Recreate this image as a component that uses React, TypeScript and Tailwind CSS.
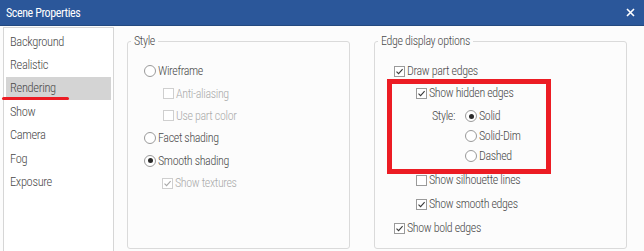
import type { ReactNode } from "react";

const SIDEBAR_ITEMS = ["Background", "Realistic", "Rendering", "Show", "Camera", "Fog", "Exposure"];

function CheckBox({ checked, disabled }: { checked?: boolean; disabled?: boolean }) {
  return (
    <span
      className={`flex h-[11px] w-[11px] shrink-0 items-center justify-center border bg-white ${
        disabled ? "border-[#cfcfcf]" : "border-[#9a9a9a]"
      }`}
    >
      {checked ? (
        <svg width="9" height="9" viewBox="0 0 9 9" fill="none">
          <path
            d="M1.5 4.6 L3.6 6.7 L7.6 2.2"
            stroke={disabled ? "#a8a8a8" : "#3a3a3a"}
            strokeWidth="1.1"
          />
        </svg>
      ) : null}
    </span>
  );
}

function Radio({ checked }: { checked?: boolean }) {
  return (
    <span className="flex h-[12px] w-[12px] shrink-0 items-center justify-center rounded-full border border-[#9a9a9a] bg-white">
      {checked ? <span className="h-[5px] w-[5px] rounded-full bg-[#2a2a2a]" /> : null}
    </span>
  );
}

function Row({
  control,
  label,
  disabled,
  className = "",
}: {
  control: ReactNode;
  label: string;
  disabled?: boolean;
  className?: string;
}) {
  return (
    <div className={`flex items-center gap-[2px] ${className}`}>
      {control}
      <span className={disabled ? "text-[#ababab]" : "text-[#4a4a4a]"}>{label}</span>
    </div>
  );
}

export default function App() {
  return (
    <div className="relative flex h-[251px] w-[644px] flex-col overflow-hidden bg-[#fcfcfc] font-['Roboto_Condensed','Liberation_Sans',sans-serif] text-[12px] font-light leading-[16px] tracking-[-0.35px]">
      {/* title bar */}
      <div className="flex h-[26px] shrink-0 items-center justify-between border-b border-[#24497f] bg-[#2b579a] pl-[6px] pr-[9px]">
        <span className="text-[12px] font-normal tracking-[-0.4px] text-white">Scene Properties</span>
        <svg width="9" height="9" viewBox="0 0 9 9">
          <path d="M1 1 L8 8 M8 1 L1 8" stroke="#ffffff" strokeWidth="1.6" />
        </svg>
      </div>

      <div className="flex min-h-0 flex-1 pl-[3px]">
        {/* sidebar */}
        <div className="mt-[1px] w-[111px] shrink-0 border border-b-0 border-[#d6d6d6] bg-white px-[2px] pt-[2px] text-[12.5px] tracking-[-0.35px]">
          {SIDEBAR_ITEMS.map((item) => (
            <div
              key={item}
              className={`flex h-[23.4px] items-center pl-[4px] text-[#4a4a4a] ${
                item === "Rendering" ? "bg-[#d4d4d4]" : ""
              }`}
            >
              {item}
            </div>
          ))}
        </div>

        {/* Style group */}
        <fieldset className="mb-[2px] ml-[13px] mt-[7px] w-[223px] rounded-[3px] border border-[#dadada]">
          <legend className="ml-[3px] px-[3px] text-[#4a4a4a]">Style</legend>
          <div className="mt-[11px] flex flex-col pl-[16px]">
            <Row className="h-[22.4px]" control={<Radio />} label="Wireframe" />
            <Row className="h-[22.4px] pl-[19px]" control={<CheckBox disabled />} label="Anti-aliasing" disabled />
            <Row className="h-[22.4px] pl-[19px]" control={<CheckBox disabled />} label="Use part color" disabled />
            <Row className="h-[22.4px]" control={<Radio />} label="Facet shading" />
            <Row className="h-[22.4px]" control={<Radio checked />} label="Smooth shading" />
            <Row className="h-[22.4px] pl-[18px]" control={<CheckBox checked disabled />} label="Show textures" disabled />
          </div>
        </fieldset>

        {/* Edge display options group */}
        <fieldset className="mb-[2px] ml-[24px] mt-[7px] w-[253px] rounded-[3px] border border-[#dadada]">
          <legend className="ml-[3px] px-[3px] text-[#4a4a4a]">Edge display options</legend>
          <div className="mt-[11px] flex flex-col pl-[19px]">
            <Row className="h-[22px]" control={<CheckBox checked />} label="Draw part edges" />
            <Row className="h-[22px] pl-[22px]" control={<CheckBox checked />} label="Show hidden edges" />
            <div className="flex pl-[38px] pt-[2px]">
              <span className="flex h-[20px] w-[33px] items-center text-[#4a4a4a]">Style:</span>
              <div className="flex flex-col">
                <Row className="h-[20px]" control={<Radio checked />} label="Solid" />
                <Row className="h-[20px]" control={<Radio />} label="Solid-Dim" />
                <Row className="h-[20px]" control={<Radio />} label="Dashed" />
              </div>
            </div>
            <Row className="mt-[2px] h-[24px] pl-[22px]" control={<CheckBox />} label="Show silhouette lines" />
            <Row className="h-[24px] pl-[22px]" control={<CheckBox checked />} label="Show smooth edges" />
            <Row className="h-[24px]" control={<CheckBox checked />} label="Show bold edges" />
          </div>
        </fieldset>
      </div>

      {/* red annotation marks */}
      <div className="absolute left-[2px] top-[97px] h-[3px] w-[67px] rounded-full bg-[#ec1c24]" />
      <div className="absolute left-[387px] top-[79px] h-[95px] w-[164px] border-[5px] border-[#ec1c24]" />
    </div>
  );
}
